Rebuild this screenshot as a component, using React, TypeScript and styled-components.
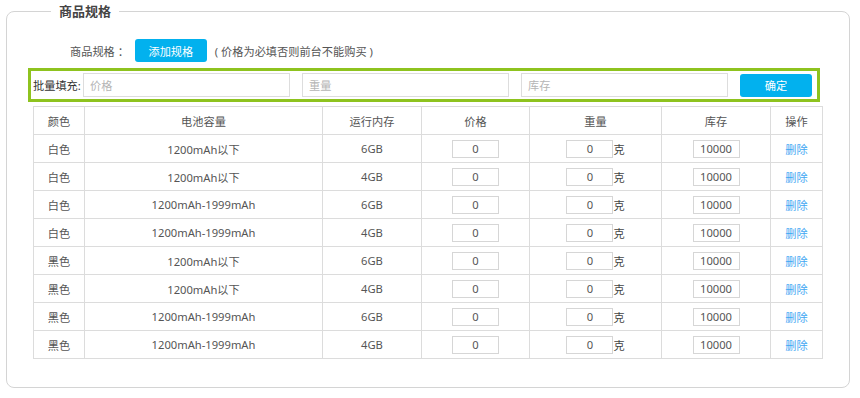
import React from 'react';
import styled, { createGlobalStyle } from 'styled-components';

const GlobalStyle = createGlobalStyle`
  body {
    margin: 0;
    background: #fff;
    font-family: "Noto Sans", "Noto Sans CJK SC", sans-serif;
    font-size: 11.2px;
    color: #555;
  }
`;

// the outer group box with its title on the border
const Group = styled.fieldset`
  margin: 1px 0 0 6px;
  padding: 0 0 28px 21px;
  width: 844px;
  height: 387px;
  box-sizing: border-box;
  border: 1px solid #d4d4d4;
  border-radius: 8px;
`;

const Title = styled.legend`
  margin-left: 23px;
  padding: 0 8px;
  font-size: 13px;
  line-height: 20px;
  font-weight: bold;
  color: #444;
`;

const SpecRow = styled.div`
  display: flex;
  align-items: center;
  height: 23px;
  margin-top: 18px;
  padding-left: 42px;
`;

const Label = styled.span`
  color: #555;
  white-space: nowrap;
`;

const BlueButton = styled.button<{ $width: number }>`
  flex-shrink: 0;
  width: ${(p) => p.$width}px;
  height: 23px;
  border: none;
  border-radius: 3px;
  background: #02b1ee;
  color: #fff;
  font-family: inherit;
  font-size: 11.2px;
  padding: 0;
  cursor: pointer;
`;

const Hint = styled.span`
  margin-left: 8px;
  color: #555;
  white-space: nowrap;
`;

const BatchBox = styled.div`
  display: flex;
  align-items: center;
  width: 792px;
  height: 34px;
  margin-top: 6px;
  box-sizing: border-box;
  border: 3px solid #8ec31f;
  padding: 0 4px 0 2px;
`;

const BatchLabel = styled.span`
  flex-shrink: 0;
  width: 50px;
  white-space: nowrap;
  color: #333;
`;

const BatchInput = styled.input`
  flex-shrink: 0;
  width: 207px;
  height: 24px;
  box-sizing: border-box;
  border: 1px solid #ddd;
  padding: 0 6px;
  margin-right: 12px;
  font-family: inherit;
  font-size: 11.2px;
  color: #555;
  outline: none;
  &::placeholder {
    color: #b5b5b5;
  }
`;

const Table = styled.table`
  margin: 4px 0 0 5px;
  width: 789px;
  border-collapse: collapse;
  table-layout: fixed;
`;

const Cell = styled.td`
  height: 27px;
  border: 1px solid #dcdcdc;
  padding: 0;
  text-align: center;
  color: #555;
`;

const HeadCell = styled(Cell).attrs({ as: 'th' })`
  font-weight: normal;
`;

const SmallInput = styled.input`
  width: 47px;
  height: 18px;
  box-sizing: border-box;
  border: 1px solid #d6d6d6;
  padding: 0;
  text-align: center;
  font-family: inherit;
  font-size: 11.2px;
  color: #555;
  vertical-align: middle;
`;

const Unit = styled.span`
  color: #444;
  vertical-align: middle;
`;

const DeleteLink = styled.a`
  color: #3fa7f3;
  text-decoration: none;
  cursor: pointer;
`;

const columns = [
  { title: '颜色', width: 51 },
  { title: '电池容量', width: 238 },
  { title: '运行内存', width: 99 },
  { title: '价格', width: 108 },
  { title: '重量', width: 132 },
  { title: '库存', width: 109 },
  { title: '操作', width: 52 },
];

const rows: [string, string, string][] = [
  ['白色', '1200mAh以下', '6GB'],
  ['白色', '1200mAh以下', '4GB'],
  ['白色', '1200mAh-1999mAh', '6GB'],
  ['白色', '1200mAh-1999mAh', '4GB'],
  ['黑色', '1200mAh以下', '6GB'],
  ['黑色', '1200mAh以下', '4GB'],
  ['黑色', '1200mAh-1999mAh', '6GB'],
  ['黑色', '1200mAh-1999mAh', '4GB'],
];

export default function App() {
  return (
    <>
      <GlobalStyle />
      <Group>
        <Title>商品规格</Title>
        <SpecRow>
          <Label>商品规格 ：</Label>
          <BlueButton $width={72} style={{ marginLeft: 6 }}>添加规格</BlueButton>
          <Hint>( 价格为必填否则前台不能购买 )</Hint>
        </SpecRow>
        <BatchBox>
          <BatchLabel>批量填充:</BatchLabel>
          <BatchInput placeholder="价格" />
          <BatchInput placeholder="重量" />
          <BatchInput placeholder="库存" />
          <BlueButton $width={72}>确定</BlueButton>
        </BatchBox>
        <Table>
          <colgroup>
            {columns.map((c) => (
              <col key={c.title} style={{ width: c.width }} />
            ))}
          </colgroup>
          <thead>
            <tr>
              {columns.map((c) => (
                <HeadCell key={c.title}>{c.title}</HeadCell>
              ))}
            </tr>
          </thead>
          <tbody>
            {rows.map(([color, battery, ram], i) => (
              <tr key={i}>
                <Cell>{color}</Cell>
                <Cell>{battery}</Cell>
                <Cell>{ram}</Cell>
                <Cell>
                  <SmallInput defaultValue="0" />
                </Cell>
                <Cell>
                  <SmallInput defaultValue="0" />
                  <Unit>克</Unit>
                </Cell>
                <Cell>
                  <SmallInput defaultValue="10000" />
                </Cell>
                <Cell>
                  <DeleteLink>删除</DeleteLink>
                </Cell>
              </tr>
            ))}
          </tbody>
        </Table>
      </Group>
    </>
  );
}
